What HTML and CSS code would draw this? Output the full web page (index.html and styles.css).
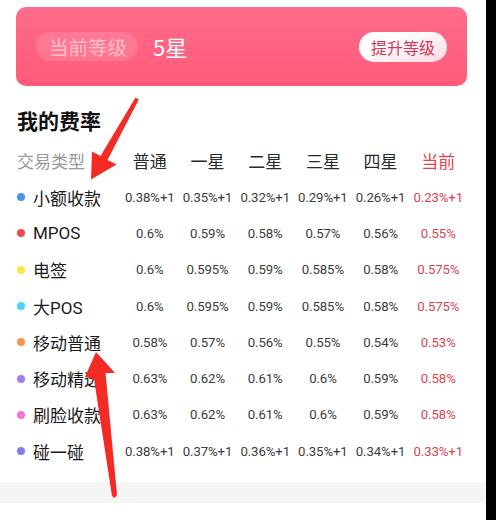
FILE: index.html
```html
<!DOCTYPE html>
<html lang="zh">
<head>
<meta charset="utf-8">
<link rel="stylesheet" href="styles.css">
</head>
<body>
<div class="screen">
  <div class="page">
    <div class="level-card">
      <div class="level-left">
        <span class="level-pill">当前等级</span>
        <span class="level-value">5星</span>
      </div>
      <span class="upgrade-btn">提升等级</span>
    </div>

    <div class="rates">
      <h2 class="rates-title">我的费率</h2>
      <div class="rate-table">
        <div class="rt-row rt-head">
          <div class="rt-type">交易类型</div>
          <div class="rt-cell">普通</div>
          <div class="rt-cell">一星</div>
          <div class="rt-cell">二星</div>
          <div class="rt-cell">三星</div>
          <div class="rt-cell">四星</div>
          <div class="rt-cell rt-current">当前</div>
        </div>
        <div class="rt-row">
          <div class="rt-type"><i class="dot dot-blue"></i>小额收款</div>
          <div class="rt-cell">0.38%+1</div><div class="rt-cell">0.35%+1</div><div class="rt-cell">0.32%+1</div><div class="rt-cell">0.29%+1</div><div class="rt-cell">0.26%+1</div><div class="rt-cell rt-current">0.23%+1</div>
        </div>
        <div class="rt-row">
          <div class="rt-type"><i class="dot dot-red"></i>MPOS</div>
          <div class="rt-cell">0.6%</div><div class="rt-cell">0.59%</div><div class="rt-cell">0.58%</div><div class="rt-cell">0.57%</div><div class="rt-cell">0.56%</div><div class="rt-cell rt-current">0.55%</div>
        </div>
        <div class="rt-row">
          <div class="rt-type"><i class="dot dot-yellow"></i>电签</div>
          <div class="rt-cell">0.6%</div><div class="rt-cell">0.595%</div><div class="rt-cell">0.59%</div><div class="rt-cell">0.585%</div><div class="rt-cell">0.58%</div><div class="rt-cell rt-current">0.575%</div>
        </div>
        <div class="rt-row">
          <div class="rt-type"><i class="dot dot-cyan"></i>大POS</div>
          <div class="rt-cell">0.6%</div><div class="rt-cell">0.595%</div><div class="rt-cell">0.59%</div><div class="rt-cell">0.585%</div><div class="rt-cell">0.58%</div><div class="rt-cell rt-current">0.575%</div>
        </div>
        <div class="rt-row">
          <div class="rt-type"><i class="dot dot-orange"></i>移动普通</div>
          <div class="rt-cell">0.58%</div><div class="rt-cell">0.57%</div><div class="rt-cell">0.56%</div><div class="rt-cell">0.55%</div><div class="rt-cell">0.54%</div><div class="rt-cell rt-current">0.53%</div>
        </div>
        <div class="rt-row">
          <div class="rt-type"><i class="dot dot-purple"></i>移动精选</div>
          <div class="rt-cell">0.63%</div><div class="rt-cell">0.62%</div><div class="rt-cell">0.61%</div><div class="rt-cell">0.6%</div><div class="rt-cell">0.59%</div><div class="rt-cell rt-current">0.58%</div>
        </div>
        <div class="rt-row">
          <div class="rt-type"><i class="dot dot-pink"></i>刷脸收款</div>
          <div class="rt-cell">0.63%</div><div class="rt-cell">0.62%</div><div class="rt-cell">0.61%</div><div class="rt-cell">0.6%</div><div class="rt-cell">0.59%</div><div class="rt-cell rt-current">0.58%</div>
        </div>
        <div class="rt-row">
          <div class="rt-type"><i class="dot dot-indigo"></i>碰一碰</div>
          <div class="rt-cell">0.38%+1</div><div class="rt-cell">0.37%+1</div><div class="rt-cell">0.36%+1</div><div class="rt-cell">0.35%+1</div><div class="rt-cell">0.34%+1</div><div class="rt-cell rt-current">0.33%+1</div>
        </div>
      </div>
    </div>

    <div class="gray-band"></div>

    <svg class="annotations" width="486" height="520" viewBox="0 0 486 520" aria-hidden="true">
      <polygon fill="#f42a24" points="135.5,97.5 138.8,99.5 107.5,160 116.5,164.5 91,179.5 92,151.5 100.5,156"/>
      <polygon fill="#f42a24" points="96,352 115,373 105.5,373 117,495 114.5,498 112,496 94,379 85,377"/>
    </svg>
  </div>
  <div class="edge"></div>
</div>
</body>
</html>
```

FILE: styles.css
```css
* { box-sizing: border-box; }

html, body {
  margin: 0;
  padding: 0;
  width: 496px;
  height: 520px;
  overflow: hidden;
  background: #000;
}

body {
  font-family: Roboto, "Noto Sans CJK SC", sans-serif;
  color: #222;
}

.screen {
  display: flex;
  width: 496px;
  height: 520px;
}

.page {
  position: relative;
  width: 486px;
  height: 520px;
  background: #fff;
  display: flex;
  flex-direction: column;
}

.edge {
  width: 10px;
  background: #000;
}

/* level card */
.level-card {
  margin: 7px 0 0 16px;
  width: 451px;
  height: 79px;
  border-radius: 10px;
  background: linear-gradient(180deg, #ff6c8b 0%, #ff5b79 100%);
  display: flex;
  align-items: center;
  justify-content: space-between;
  padding: 0 20px;
}

.level-left {
  display: flex;
  align-items: center;
  gap: 15px;
}

.level-pill {
  height: 29px;
  line-height: 29px;
  padding: 0 11px 0 13px;
  border-radius: 15px;
  background: rgba(255, 255, 255, 0.13);
  color: rgba(255, 255, 255, 0.55);
  font-size: 19.5px;
  font-family: "Noto Sans CJK SC", sans-serif;
}

.level-value {
  color: #fff;
  font-size: 22px;
  font-family: "Noto Sans CJK SC", sans-serif;
  line-height: 29px;
}

.upgrade-btn {
  height: 30px;
  line-height: 30px;
  padding: 0 12px;
  border-radius: 15px;
  background: linear-gradient(160deg, #ffffff 30%, #ffd9e2 100%);
  color: #d3385b;
  font-size: 16px;
  font-family: "Noto Sans CJK SC", sans-serif;
}

/* rates */
.rates {
  padding: 0 0 0 17px;
}

.rates-title {
  margin: 19px 0 0;
  height: 30px;
  line-height: 30px;
  font-size: 21px;
  font-weight: 700;
  color: #111;
  font-family: "Noto Sans CJK SC", sans-serif;
}

.rate-table {
  margin-top: 6px;
  display: flex;
  flex-direction: column;
}

.rt-row {
  display: grid;
  grid-template-columns: 104px repeat(6, 57.7px);
  align-items: center;
  height: 36.3px;
}

.rt-head {
  height: 38px;
}

.rt-type {
  display: flex;
  align-items: center;
  font-size: 17px;
  color: #1a1a1a;
  white-space: nowrap;
}

.rt-head .rt-type {
  color: #9a9a9a;
  font-family: "Noto Sans CJK SC", sans-serif;
}

.rt-cell {
  text-align: center;
  font-size: 13.2px;
  color: #3c3c3c;
  white-space: nowrap;
  letter-spacing: -0.1px;
}

.rt-head .rt-cell {
  font-size: 17px;
  color: #2a2a2a;
  font-family: "Noto Sans CJK SC", sans-serif;
  letter-spacing: 0;
}

.rt-cell.rt-current {
  color: #e0434d;
}

.dot {
  display: inline-block;
  width: 8px;
  height: 8px;
  border-radius: 50%;
  margin: 0 8px 0 0;
  flex: none;
}
.dot-blue { background: #4592f3; }
.dot-red { background: #f04a4a; }
.dot-yellow { background: #fce444; }
.dot-cyan { background: #4fd4f7; }
.dot-orange { background: #fb9350; }
.dot-purple { background: #a67cf2; }
.dot-pink { background: #f475d6; }
.dot-indigo { background: #7f7ef2; }

.gray-band {
  margin-top: 12.5px;
  height: 21px;
  background: #f5f5f5;
}

.annotations {
  position: absolute;
  left: 0;
  top: 0;
  pointer-events: none;
}
```
